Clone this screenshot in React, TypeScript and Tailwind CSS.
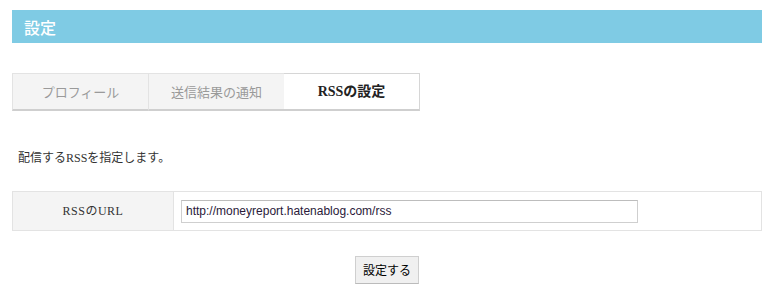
export default function App() {
  const tabs = [
    { label: "プロフィール", active: false },
    { label: "送信結果の通知", active: false },
    { label: "RSSの設定", active: true },
  ];

  return (
    <div className="w-[767px] h-[293px] bg-white pt-[10px] pl-[12px] pr-[5px] font-['Liberation_Serif','Noto_Sans_CJK_JP',serif] text-[12px] text-[#333]">
      <h1 className="h-[33px] bg-[#7fcbe4] pl-[12px] flex items-center text-[16px] text-white font-['Noto_Sans_CJK_JP',sans-serif] font-medium">
        設定
      </h1>

      <ul className="mt-[30px] flex w-[408px]">
        {tabs.map((tab) => (
          <li
            key={tab.label}
            className={
              tab.active
                ? "w-[136px] h-[38px] flex items-center justify-center bg-white border-t border-r border-[#d6d6d6] border-b-2 border-b-[#cfcfcf] font-bold text-[#222] text-[14px]"
                : "w-[136px] h-[38px] flex items-center justify-center bg-[#f4f4f4] border-t border-l border-[#e3e3e3] border-b-2 border-b-[#cfcfcf] text-[#9a9a9a] text-[13px] font-['Noto_Sans_CJK_JP',sans-serif]"
            }
          >
            {tab.label}
          </li>
        ))}
      </ul>

      <p className="mt-[40px] ml-[6px] h-[14px] leading-[14px]">配信するRSSを指定します。</p>

      <div className="mt-[26px] flex h-[40px] border border-[#e3e3e3]">
        <div className="w-[161px] bg-[#f4f4f4] border-r border-[#e3e3e3] flex items-center justify-center tracking-[0.5px]">
          RSSのURL
        </div>
        <div className="flex-1 flex items-center pl-[7px]">
          <input
            readOnly
            value="http://moneyreport.hatenablog.com/rss"
            className="w-[457px] h-[23px] border border-[#cfcfcf] border-t-[#bdbdbd] px-[4px] text-[12px] text-[#2a1a3a] font-['Liberation_Sans',Arial,sans-serif] outline-none"
          />
        </div>
      </div>

      <div className="mt-[25px] flex justify-center">
        <button className="w-[64px] h-[28px] bg-[#f0f0f0] border border-[#cfcfcf] border-b-[#bbb] text-[12px] text-black font-['Noto_Sans_CJK_JP',sans-serif]">
          設定する
        </button>
      </div>
    </div>
  );
}
